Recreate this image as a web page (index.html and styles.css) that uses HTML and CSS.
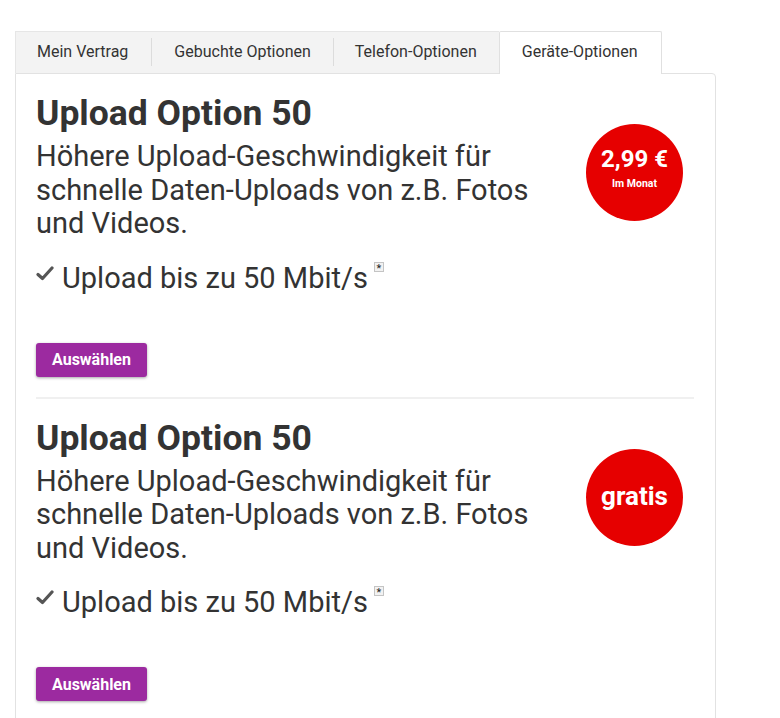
FILE: index.html
```html
<!DOCTYPE html>
<html lang="de">
<head>
<meta charset="utf-8">
<title>Geräte-Optionen</title>
<link rel="stylesheet" href="styles.css">
</head>
<body>
<div class="wrap">
  <ul class="tabs">
    <li class="tab"><span class="tab-label first">Mein Vertrag</span></li>
    <li class="tab"><span class="tab-label second">Gebuchte Optionen</span></li>
    <li class="tab"><span class="tab-label last">Telefon-Optionen</span></li>
    <li class="tab active"><span class="tab-label current">Geräte-Optionen</span></li>
  </ul>
  <div class="panel">
    <div class="item">
      <div class="info">
        <h2 class="title">Upload Option 50</h2>
        <p class="desc">Höhere Upload-Geschwindigkeit für schnelle Daten-Uploads von z.B. Fotos und Videos.</p>
        <ul class="features">
          <li class="feature">
            <svg class="check" width="18" height="15" viewBox="0 0 18 15"><path d="M2 8.5 L6.5 12.5 L16 2" fill="none" stroke="#555" stroke-width="3.2" stroke-linecap="round" stroke-linejoin="round"/></svg>
            <span>Upload bis zu 50 Mbit/s</span><span class="note">*</span>
          </li>
        </ul>
        <button class="btn">Auswählen</button>
      </div>
      <div class="badge">
        <span class="price">2,99 €</span>
        <span class="per">Im Monat</span>
      </div>
    </div>
    <div class="item">
      <div class="info">
        <h2 class="title">Upload Option 50</h2>
        <p class="desc">Höhere Upload-Geschwindigkeit für schnelle Daten-Uploads von z.B. Fotos und Videos.</p>
        <ul class="features">
          <li class="feature">
            <svg class="check" width="18" height="15" viewBox="0 0 18 15"><path d="M2 8.5 L6.5 12.5 L16 2" fill="none" stroke="#555" stroke-width="3.2" stroke-linecap="round" stroke-linejoin="round"/></svg>
            <span>Upload bis zu 50 Mbit/s</span><span class="note">*</span>
          </li>
        </ul>
        <button class="btn">Auswählen</button>
      </div>
      <div class="badge">
        <span class="free">gratis</span>
      </div>
    </div>
  </div>
</div>
</body>
</html>
```
FILE: styles.css
```css
* { box-sizing: border-box; }
html, body {
  margin: 0;
  background: #fff;
  font-family: Roboto, "Liberation Sans", sans-serif;
  color: #333;
}
.wrap {
  width: 716px;
  padding: 31px 0 0 15px;
}
.tabs {
  list-style: none;
  margin: 0;
  padding: 0;
  display: flex;
  align-items: flex-start;
}
.tab {
  background: #f3f3f3;
  border-top: 1px solid #e6e6e6;
  height: 42px;
  padding: 6px 0 7px;
  font-size: 16px;
  color: #333;
}
.tab:first-child { border-left: 1px solid #e6e6e6; }
.tab-label {
  display: block;
  line-height: 28px;
  padding: 0 22px 0 21px;
  border-right: 1px solid #dcdcdc;
}
.tab-label.first { padding: 0 23px 0 21px; }
.tab-label.second { padding: 0 22px 0 22px; }
.tab-label.last { border-right: 0; padding: 0 22px 0 21px; }
.tab-label.current { border-right: 0; padding: 0 23px 0 22px; }
.tab.active {
  background: #fff;
  border: 1px solid #e0e0e0;
  border-bottom: 0;
  border-radius: 2px 2px 0 0;
  height: 43px;
  margin-bottom: -1px;
  position: relative;
  z-index: 1;
}
.panel {
  border: 1px solid #e2e2e2;
  border-radius: 0 4px 4px 4px;
  padding: 0 21px 0 20px;
}
.item {
  display: flex;
  align-items: flex-start;
  padding: 21px 0 20px;
  border-bottom: 2px solid #f0f0f0;
}
.info { flex: 1; }
.title {
  margin: 0;
  font-size: 35.5px;
  line-height: 36px;
  font-weight: 700;
  color: #333;
}
.desc {
  margin: 9px 0 0;
  font-size: 29px;
  line-height: 33.5px;
  color: #333;
}
.features {
  list-style: none;
  margin: 20px 0 0;
  padding: 0;
}
.feature {
  display: flex;
  align-items: flex-start;
  font-size: 29px;
  line-height: 34px;
}
.check { margin: 5px 8px 0 0; }
.note {
  display: inline-block;
  width: 10px;
  height: 10px;
  margin: 1px 0 0 6px;
  border: 1px solid #c4c4c4;
  background: #f2f2f2;
  font-size: 11px;
  line-height: 12px;
  text-align: center;
  color: #222;
}
.btn {
  margin-top: 48px;
  display: block;
  width: 111px;
  height: 34px;
  border: 0;
  border-radius: 3px;
  background: #9c2aa0;
  color: #fff;
  font-family: Roboto, "Liberation Sans", sans-serif;
  font-weight: 700;
  font-size: 16px;
  box-shadow: 0 1px 3px rgba(0,0,0,0.35);
  padding: 0;
}
.badge {
  width: 97px;
  height: 97px;
  border-radius: 50%;
  background: #e60000;
  color: #fff;
  margin: 29px 11px 0 26px;
  padding-bottom: 8px;
  display: flex;
  flex-direction: column;
  align-items: center;
  justify-content: center;
}
.badge.free-badge { padding-bottom: 0; }
.price { font-size: 24px; font-weight: 700; line-height: 26px; }
.per { font-size: 10.5px; font-weight: 700; line-height: 14px; margin-top: 5px; }
.free { font-size: 26px; font-weight: 700; line-height: 30px; margin-top: 6px; }
```
